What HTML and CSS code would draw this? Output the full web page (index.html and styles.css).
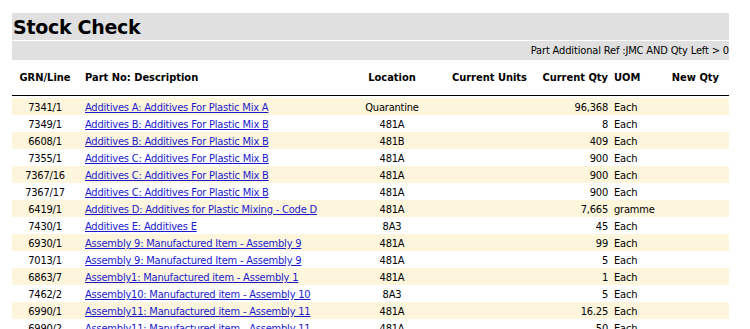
FILE: index.html
```html
<!DOCTYPE html>
<html>
<head>
<meta charset="utf-8">
<link rel="stylesheet" href="styles.css">
</head>
<body>
<div class="page">
  <div class="title-band"><h1 class="title">Stock Check</h1></div>
  <div class="filter-band">Part Additional Ref :JMC AND Qty Left &gt; 0</div>
  <table class="grid">
    <colgroup>
      <col class="c-grn"><col class="c-part"><col class="c-loc"><col class="c-units"><col class="c-qty"><col class="c-uom"><col class="c-new">
    </colgroup>
    <thead>
      <tr>
        <th class="ctr">GRN/Line</th>
        <th class="lft part">Part No: Description</th>
        <th class="ctr">Location</th>
        <th class="rgt">Current Units</th>
        <th class="rgt">Current Qty</th>
        <th class="lft">UOM</th>
        <th class="rgt new">New Qty</th>
      </tr>
    </thead>
    <tbody>
      <tr><td class="ctr">7341/1</td><td class="part"><a href="#">Additives A: Additives For Plastic Mix A</a></td><td class="ctr">Quarantine</td><td></td><td class="rgt">96,368</td><td>Each</td><td></td></tr>
      <tr><td class="ctr">7349/1</td><td class="part"><a href="#">Additives B: Additives For Plastic Mix B</a></td><td class="ctr">481A</td><td></td><td class="rgt">8</td><td>Each</td><td></td></tr>
      <tr><td class="ctr">6608/1</td><td class="part"><a href="#">Additives B: Additives For Plastic Mix B</a></td><td class="ctr">481B</td><td></td><td class="rgt">409</td><td>Each</td><td></td></tr>
      <tr><td class="ctr">7355/1</td><td class="part"><a href="#">Additives C: Additives For Plastic Mix B</a></td><td class="ctr">481A</td><td></td><td class="rgt">900</td><td>Each</td><td></td></tr>
      <tr><td class="ctr">7367/16</td><td class="part"><a href="#">Additives C: Additives For Plastic Mix B</a></td><td class="ctr">481A</td><td></td><td class="rgt">900</td><td>Each</td><td></td></tr>
      <tr><td class="ctr">7367/17</td><td class="part"><a href="#">Additives C: Additives For Plastic Mix B</a></td><td class="ctr">481A</td><td></td><td class="rgt">900</td><td>Each</td><td></td></tr>
      <tr><td class="ctr">6419/1</td><td class="part"><a href="#">Additives D: Additives for Plastic Mixing - Code D</a></td><td class="ctr">481A</td><td></td><td class="rgt">7,665</td><td>gramme</td><td></td></tr>
      <tr><td class="ctr">7430/1</td><td class="part"><a href="#">Additives E: Additives E</a></td><td class="ctr">8A3</td><td></td><td class="rgt">45</td><td>Each</td><td></td></tr>
      <tr><td class="ctr">6930/1</td><td class="part"><a href="#">Assembly 9: Manufactured Item - Assembly 9</a></td><td class="ctr">481A</td><td></td><td class="rgt">99</td><td>Each</td><td></td></tr>
      <tr><td class="ctr">7013/1</td><td class="part"><a href="#">Assembly 9: Manufactured Item - Assembly 9</a></td><td class="ctr">481A</td><td></td><td class="rgt">5</td><td>Each</td><td></td></tr>
      <tr><td class="ctr">6863/7</td><td class="part"><a href="#">Assembly1: Manufactured item - Assembly 1</a></td><td class="ctr">481A</td><td></td><td class="rgt">1</td><td>Each</td><td></td></tr>
      <tr><td class="ctr">7462/2</td><td class="part"><a href="#">Assembly10: Manufactured item - Assembly 10</a></td><td class="ctr">8A3</td><td></td><td class="rgt">5</td><td>Each</td><td></td></tr>
      <tr><td class="ctr">6990/1</td><td class="part"><a href="#">Assembly11: Manufactured item - Assembly 11</a></td><td class="ctr">481A</td><td></td><td class="rgt">16.25</td><td>Each</td><td></td></tr>
      <tr><td class="ctr">6990/2</td><td class="part"><a href="#">Assembly11: Manufactured item - Assembly 11</a></td><td class="ctr">481A</td><td></td><td class="rgt">50</td><td>Each</td><td></td></tr>
    </tbody>
  </table>
</div>
</body>
</html>
```
FILE: styles.css
```css
html, body {
  margin: 0;
  padding: 0;
  background: #fff;
}
body {
  font-family: "DejaVu Sans Condensed", "DejaVu Sans", sans-serif;
  font-size: 11px;
  color: #000;
}
.page {
  padding: 13px 21px 0 12px;
  width: 717px;
}
.title-band {
  background: #e0e0e0;
  height: 27px;
  border-bottom: 1px solid #fff;
}
.title {
  margin: 0;
  font-family: "DejaVu Sans", sans-serif;
  font-size: 19px;
  font-weight: bold;
  line-height: 28px;
  letter-spacing: -0.3px;
  padding-left: 1px;
}
.filter-band {
  background: #e0e0e0;
  height: 19px;
  line-height: 19px;
  text-align: right;
  font-size: 11px;
  letter-spacing: -0.15px;
}
.grid {
  width: 717px;
  table-layout: fixed;
  border-collapse: separate;
  border-spacing: 0;
}
.c-grn { width: 66px; }
.c-part { width: 272px; }
.c-loc { width: 84px; }
.c-units { width: 96px; }
.c-qty { width: 81px; }
.c-uom { width: 50px; }
.c-new { width: 68px; }
th {
  height: 35px;
  padding: 0 3px;
  font-weight: bold;
  border-bottom: 1px solid #000;
  vertical-align: middle;
  white-space: nowrap;
}
th.new { padding-right: 10px; }
th.part { padding-left: 7px; }
td {
  line-height: 15px;
  padding: 2px 3px 0;
  white-space: nowrap;
  overflow: hidden;
  letter-spacing: -0.2px;
  background-clip: padding-box;
}
td.part { padding-left: 7px; }
tbody tr:first-child td { border-top: 2px solid #fff; }
tbody tr:nth-child(odd) td { background-color: #fdf5dc; }
.ctr { text-align: center; }
.lft { text-align: left; }
.rgt { text-align: right; }
a {
  color: #1a1acc;
  text-decoration: underline;
}
```
